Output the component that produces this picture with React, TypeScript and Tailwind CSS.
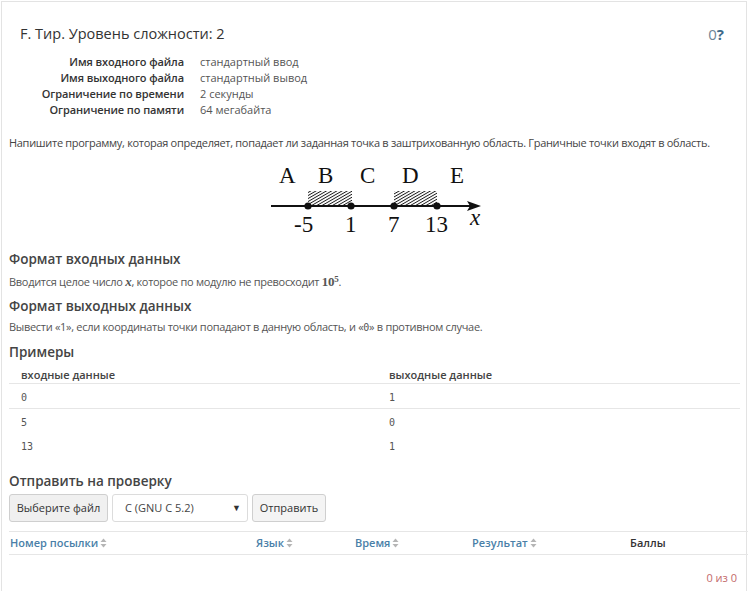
import React from "react";

const SortIcon = () => (
  <svg width="7" height="10" viewBox="0 0 7 10" className="inline-block ml-[2px] align-[-1px]">
    <path d="M3.5 0.5 L6.5 4 L0.5 4 Z" fill="#b5b5b5" />
    <path d="M3.5 9.5 L6.5 6 L0.5 6 Z" fill="#b5b5b5" />
  </svg>
);

const NumberLine = () => (
  <svg width="232" height="86" viewBox="0 0 232 86" className="block">
    <defs>
      <pattern id="hatch" width="2.6" height="2.6" patternUnits="userSpaceOnUse" patternTransform="rotate(60)">
        <rect width="2.6" height="2.6" fill="white" />
        <line x1="0" y1="0" x2="0" y2="2.6" stroke="#1a1a1a" strokeWidth="1.8" />
      </pattern>
    </defs>
    <g fontFamily="'Liberation Serif', 'Times New Roman', serif" fontSize="23" fill="#111">
      <text x="16" y="22">A</text>
      <text x="55" y="22">B</text>
      <text x="97" y="22">C</text>
      <text x="139" y="22">D</text>
      <text x="187" y="22">E</text>
    </g>
    <rect x="45" y="30" width="44" height="15" fill="url(#hatch)" />
    <rect x="131" y="30" width="43" height="15" fill="url(#hatch)" />
    <line x1="8" y1="45" x2="212" y2="45" stroke="#111" strokeWidth="2" />
    <path d="M218 45 L204 40 L207 45 L204 50 Z" fill="#111" />
    <circle cx="45" cy="45" r="3.6" fill="#111" />
    <circle cx="88" cy="45" r="3.6" fill="#111" />
    <circle cx="131" cy="45" r="3.6" fill="#111" />
    <circle cx="174" cy="45" r="3.6" fill="#111" />
    <g fontFamily="'Liberation Serif', 'Times New Roman', serif" fontSize="23" fill="#111">
      <text x="31" y="71">-5</text>
      <text x="82" y="71">1</text>
      <text x="125" y="71">7</text>
      <text x="162" y="71">13</text>
      <text x="207" y="64" fontStyle="italic">x</text>
    </g>
  </svg>
);

const mono = { fontFamily: "'DejaVu Sans Mono', monospace" };

export default function App() {
  return (
    <div className="w-[754px] h-[591px] bg-white overflow-hidden" style={{ fontFamily: "'Open Sans', 'Noto Sans', sans-serif" }}>
      <div className="ml-[1px] mt-[1px] w-[746px] h-[600px] border-l border-t border-r border-[#e3e3e3] bg-white text-[#333]">
        <div className="flex items-start justify-between pl-[18px] pr-[22px] pt-[21px]">
          <div className="text-[14.5px] leading-[22px] text-[#333]">F. Тир. Уровень сложности: 2</div>
          <div className="text-[15px] leading-[22px] text-[#6f8596]">
            0<span className="font-bold text-[#3d6a8a]">?</span>
          </div>
        </div>
        <div className="mt-[9px] grid grid-cols-[182px_1fr] gap-x-[16px] text-[11px] leading-[16px]">
          <div className="text-right font-semibold tracking-[-0.1px] text-[#333]">Имя входного файла</div>
          <div className="text-[#555]">стандартный ввод</div>
          <div className="text-right font-semibold tracking-[-0.1px] text-[#333]">Имя выходного файла</div>
          <div className="text-[#555]">стандартный вывод</div>
          <div className="text-right font-semibold tracking-[-0.1px] text-[#333]">Ограничение по времени</div>
          <div className="text-[#555]">2 секунды</div>
          <div className="text-right font-semibold tracking-[-0.1px] text-[#333]">Ограничение по памяти</div>
          <div className="text-[#555]">64 мегабайта</div>
        </div>
        <div className="px-[7px]">
          <p className="mt-[17px] text-[11px] leading-[16px] tracking-[-0.3px] text-[#444] whitespace-nowrap">
            Напишите программу, которая определяет, попадает ли заданная точка в заштрихованную область. Граничные точки входят в область.
          </p>
          <div className="mt-[10px] ml-[254px]">
            <NumberLine />
          </div>
          <h3 className="mt-[2px] text-[13.5px] leading-[20px] font-semibold text-[#444]">Формат входных данных</h3>
          <p className="mt-[5px] text-[11px] leading-[16px] tracking-[-0.3px] text-[#555]">
            Вводится целое число <i style={{ fontFamily: "'Liberation Serif', serif" }} className="font-bold text-[13px]">x</i>, которое по модулю не превосходит{" "}
            <b style={{ fontFamily: "'Liberation Serif', serif" }} className="text-[13px]">10<sup className="text-[9px]">5</sup></b>.
          </p>
          <h3 className="mt-[6px] text-[13.5px] leading-[20px] font-semibold text-[#444]">Формат выходных данных</h3>
          <p className="mt-[3px] text-[11px] leading-[16px] tracking-[-0.3px] text-[#555]">
            Вывести «1», если координаты точки попадают в данную область, и «<span style={mono} className="text-[10px]">0</span>» в противном случае.
          </p>
          <h3 className="mt-[6px] text-[13.5px] leading-[20px] font-semibold text-[#444]">Примеры</h3>
          <div className="mt-[5px] w-[731px] text-[11px]">
            <div className="grid grid-cols-[368px_1fr] border-b border-[#e6e6e6] h-[17px] leading-[16px] px-[12px] font-semibold text-[#444]">
              <div>входные данные</div>
              <div>выходные данные</div>
            </div>
            <div className="grid grid-cols-[368px_1fr] border-b border-[#e6e6e6] h-[25px] pt-[6px] leading-[16px] px-[12px] text-[10px] text-[#555]" style={mono}>
              <div>0</div>
              <div>1</div>
            </div>
            <div className="grid grid-cols-[368px_1fr] h-[24px] pt-[6px] leading-[16px] px-[12px] text-[10px] text-[#555]" style={mono}>
              <div>5</div>
              <div>0</div>
            </div>
            <div className="grid grid-cols-[368px_1fr] h-[24px] pt-[6px] leading-[16px] px-[12px] text-[10px] text-[#555]" style={mono}>
              <div>13</div>
              <div>1</div>
            </div>
          </div>
          <h3 className="mt-[14px] text-[13.5px] leading-[20px] font-semibold text-[#444]">Отправить на проверку</h3>
          <div className="mt-[3px] flex gap-[4px] text-[11px]">
            <div className="h-[28px] w-[99px] flex items-center justify-center rounded-[3px] border border-[#cfcfcf] bg-[#f0f0f0] text-[#333]">Выберите файл</div>
            <div className="h-[28px] w-[136px] flex items-center justify-between rounded-[3px] border border-[#dcdcdc] bg-white pl-[12px] pr-[6px] text-[#444]">
              <span>C (GNU C 5.2)</span>
              <span className="text-[9px] text-[#333]">▼</span>
            </div>
            <div className="h-[28px] w-[74px] flex items-center justify-center rounded-[3px] border border-[#cfcfcf] bg-[#f4f4f4] text-[#333]">Отправить</div>
          </div>
          <div className="mt-[9px] w-[739px] border-t border-[#e6e6e6] border-b h-[24px] grid grid-cols-[246px_99px_117px_158px_1fr] items-center pl-[1px] text-[11px] font-semibold">
            <div className="text-[#4a7fa8]">Номер посылки<SortIcon /></div>
            <div className="text-[#4a7fa8]">Язык<SortIcon /></div>
            <div className="text-[#4a7fa8]">Время<SortIcon /></div>
            <div className="text-[#4a7fa8]">Результат<SortIcon /></div>
            <div className="text-[#333]">Баллы</div>
          </div>
          <div className="mt-[15px] w-[728px] text-right text-[11px] text-[#c46a6a]">0 из 0</div>
        </div>
      </div>
    </div>
  );
}
